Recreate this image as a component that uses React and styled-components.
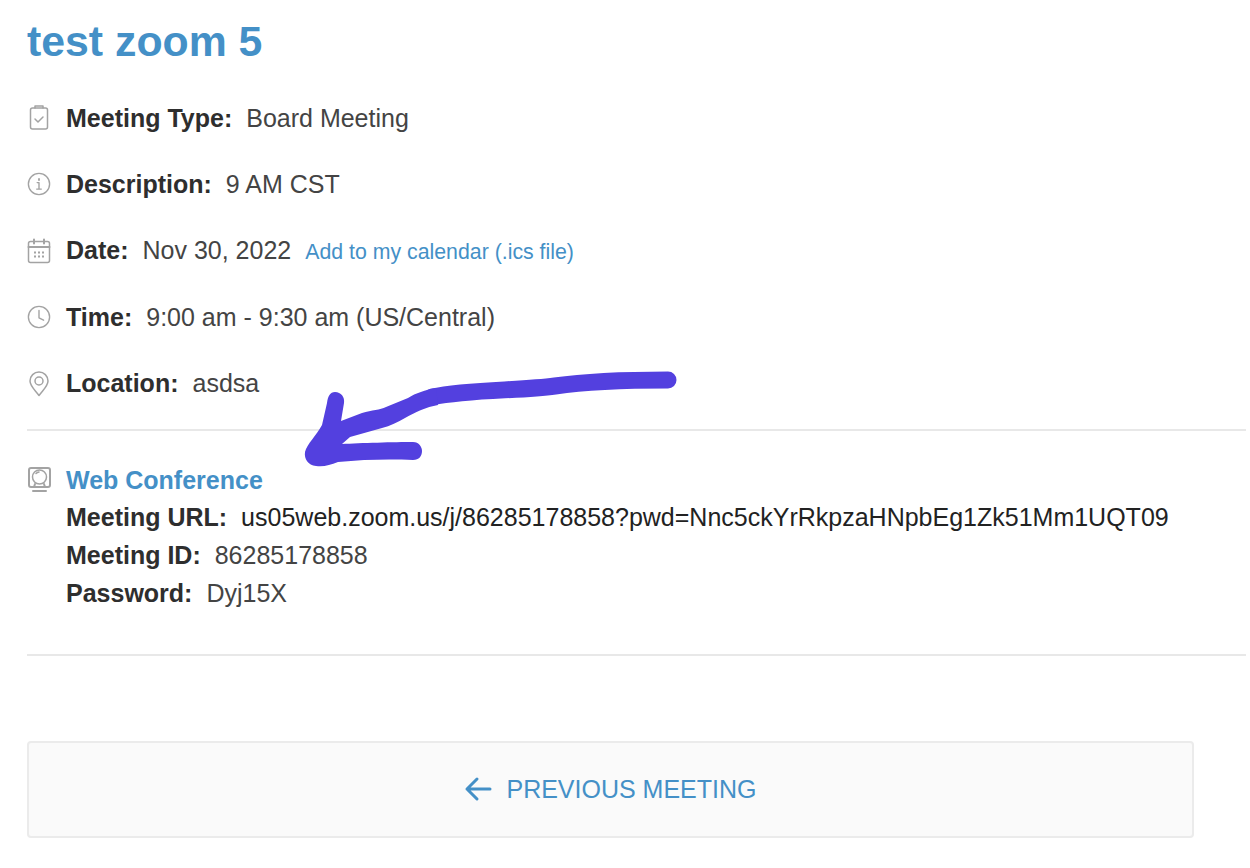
import React from "react";
import styled, { createGlobalStyle } from "styled-components";

const Global = createGlobalStyle`
  html, body { margin: 0; padding: 0; background: #fff; }
  body { font-family: "Liberation Sans", Arial, sans-serif; color: #333; }
`;

const Page = styled.div`
  position: relative;
  width: 1250px;
  height: 868px;
  overflow: hidden;
  box-sizing: border-box;
  padding: 17px 4px 0 27px;
`;

const Title = styled.h1`
  margin: 0 0 38px;
  font-size: 42.8px;
  line-height: 49px;
  font-weight: 700;
  color: #4490c7;
`;

const Rows = styled.div`
  display: flex;
  flex-direction: column;
  gap: 38.4px;
`;

const Row = styled.div`
  display: flex;
  align-items: center;
  height: 28px;
  font-size: 25px;
  white-space: nowrap;
`;

const IconSlot = styled.span`
  flex: 0 0 24px;
  width: 24px;
  height: 28px;
  margin-right: 15px;
  display: flex;
  align-items: center;
  justify-content: center;
  svg { display: block; }
`;

const Label = styled.b`
  font-weight: 700;
  color: #2e2e2e;
  margin-right: 14px;
`;

const Value = styled.span`
  color: ${(p) => (p.$dark ? "#222" : "#444")};
`;

const Link = styled.a`
  color: #4490c7;
  font-size: 21.3px;
  margin-left: 14px;
  padding-top: 3px;
  text-decoration: none;
`;

const Divider = styled.hr`
  margin: ${(p) => p.$top}px 0 0;
  border: 0;
  height: 2px;
  background: #e8e8e8;
`;

const Conference = styled.div`
  margin-top: 31px;
`;

const ConfHead = styled(Row)`
  height: 36px;
`;

const ConfTitle = styled.span`
  color: #4490c7;
  font-weight: 700;
  padding-top: 2px;
`;

const Detail = styled.div`
  height: 38px;
  line-height: 38px;
  padding-left: 39px;
  font-size: 25px;
  white-space: nowrap;
`;

const PrevButton = styled.a`
  margin-top: 85px;
  width: 1167px;
  height: 97px;
  box-sizing: border-box;
  display: flex;
  align-items: center;
  justify-content: center;
  gap: 14px;
  background: #fafafa;
  border: 2px solid #ebebeb;
  border-radius: 4px;
  color: #4490c7;
  font-size: 25px;
  text-decoration: none;
`;

const Scribble = styled.svg`
  position: absolute;
  left: 0;
  top: 0;
  pointer-events: none;
`;

const stroke = { fill: "none", stroke: "#a3a3a3", strokeWidth: 1.5, strokeLinecap: "round", strokeLinejoin: "round" };

const Clipboard = () => (
  <svg width="24" height="28" viewBox="0 0 24 28" {...stroke}>
    <rect x="3.500" y="4" width="17" height="21" rx="2" />
    <path d="M8 4V2h8v2M8 15l3 3 5-5" />
  </svg>
);
const Info = () => (
  <svg width="26" height="26" viewBox="0 0 26 26" {...stroke}>
    <circle cx="13" cy="13" r="11.500" />
    <path d="M11 11.500h2v7M10.500 18.500h5" />
    <path d="M13 7.500v1.200" strokeWidth="2" />
  </svg>
);
const Calendar = () => (
  <svg width="24" height="26" viewBox="0 0 24 26" {...stroke}>
    <rect x="1.500" y="3.500" width="21" height="21" rx="2" />
    <path d="M1.500 9h21M7 1.500v4M17 1.500v4" strokeWidth="2" />
    <path d="M7 14.500h2M11 14.500h2M15 14.500h2M7 18.500h2M11 18.500h2M15 18.500h2" strokeWidth="2" strokeLinecap="butt" />
  </svg>
);
const Clock = () => (
  <svg width="26" height="26" viewBox="0 0 26 26" {...stroke}>
    <circle cx="13" cy="13" r="11.500" />
    <path d="M13 6v8l5 2.500" />
  </svg>
);
const Pin = () => (
  <svg width="24" height="26" viewBox="0 0 24 26" {...stroke}>
    <path d="M12 24.500C8 19 3 15 3 10a9 9 0 0 1 18 0c0 5-5 9-9 14.500z" />
    <circle cx="12" cy="10" r="4" />
  </svg>
);
const Webcam = () => (
  <svg width="24" height="28" viewBox="0 0 24 28" {...stroke}>
    <rect x="2" y="2" width="21" height="19" rx="2" strokeWidth="2" />
    <circle cx="12.500" cy="11" r="7" />
    <path d="M9 7.500a5 5 0 0 1 3-1.500" />
    <path d="M8 18l-1 3M17 18l1 3M6 25h13" strokeWidth="2" />
  </svg>
);
const BackArrow = () => (
  <svg width="28" height="28" viewBox="0 0 28 28" fill="none" stroke="#4490c7" strokeWidth="3" strokeLinecap="round" strokeLinejoin="round">
    <path d="M3 14h23M13 4L3 14l10 10" />
  </svg>
);

const rows = [
  { icon: <Clipboard />, label: "Meeting Type:", value: "Board Meeting" },
  { icon: <Info />, label: "Description:", value: "9 AM CST" },
  { icon: <Calendar />, label: "Date:", value: "Nov 30, 2022", link: "Add to my calendar (.ics file)" },
  { icon: <Clock />, label: "Time:", value: "9:00 am - 9:30 am (US/Central)" },
  { icon: <Pin />, label: "Location:", value: "asdsa" },
];

const details = [
  { label: "Meeting URL:", value: "us05web.zoom.us/j/86285178858?pwd=Nnc5ckYrRkpzaHNpbEg1Zk51Mm1UQT09", dark: true },
  { label: "Meeting ID:", value: "86285178858" },
  { label: "Password:", value: "Dyj15X" },
];

export default function App() {
  return (
    <Page>
      <Global />
      <Title>test zoom 5</Title>
      <Rows>
        {rows.map((r) => (
          <Row key={r.label}>
            <IconSlot>{r.icon}</IconSlot>
            <Label>{r.label}</Label>
            <Value>{r.value}</Value>
            {r.link && <Link href="#">{r.link}</Link>}
          </Row>
        ))}
      </Rows>
      <Divider $top={31} />
      <Conference>
        <ConfHead>
          <IconSlot><Webcam /></IconSlot>
          <ConfTitle>Web Conference</ConfTitle>
        </ConfHead>
        {details.map((d) => (
          <Detail key={d.label}>
            <Label>{d.label}</Label>
            <Value $dark={d.dark}>{d.value}</Value>
          </Detail>
        ))}
      </Conference>
      <Divider $top={42} />
      <PrevButton href="#">
        <BackArrow />
        PREVIOUS MEETING
      </PrevButton>
      <Scribble width="1250" height="868" viewBox="0 0 1250 868" fill="none">
        <path stroke="#5340df" strokeWidth="17" strokeLinecap="round" d="M668 380C640 380 590 381 555 386C520 391 470 389 432 397" />
        <path
          fill="#5340df"
          d="M335 392C341 392 345 397 344 403L341 421L362 413C372 410 380 410 386 407L408 398C416 393 425 390 436 388L438 405C426 407 416 412 405 418C398 422 390 426 382 428L350 437L342 444C360 443 395 442 413 442C419 442 422 447 422 451C422 456 419 460 413 460C395 459 365 459 338 462C330 465 324 467 316 466C308 465 304 459 305 452C307 444 316 436 322 425L327 403C328 396 330 392 335 392Z"
        />
      </Scribble>
    </Page>
  );
}
